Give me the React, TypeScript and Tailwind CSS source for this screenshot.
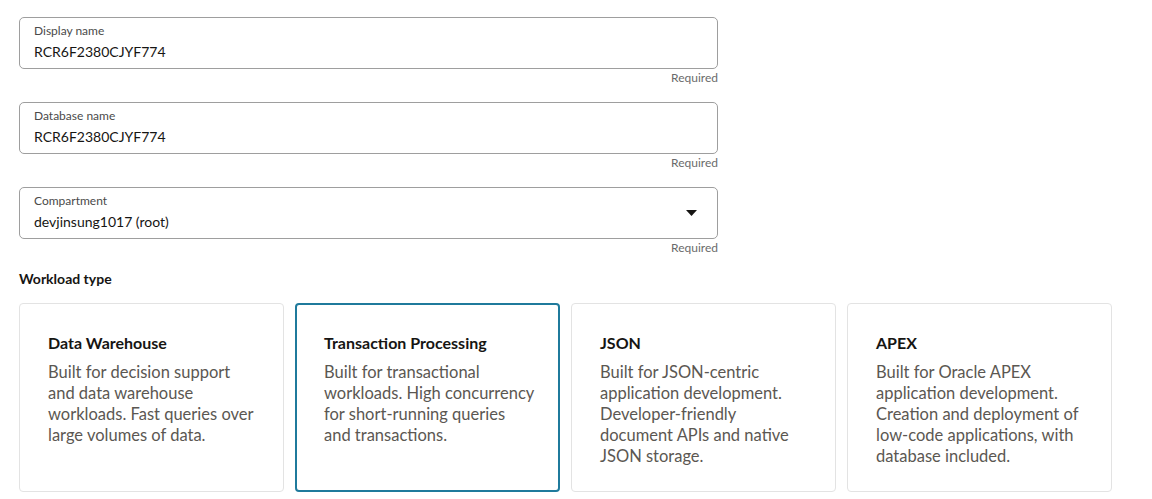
import { useState } from 'react';

const fields = [
  { label: 'Display name', value: 'RCR6F2380CJYF774', select: false },
  { label: 'Database name', value: 'RCR6F2380CJYF774', select: false },
  { label: 'Compartment', value: 'devjinsung1017 (root)', select: true },
];

const workloads = [
  {
    id: 'dw',
    title: 'Data Warehouse',
    desc: 'Built for decision support and data warehouse workloads. Fast queries over large volumes of data.',
  },
  {
    id: 'tp',
    title: 'Transaction Processing',
    desc: 'Built for transactional workloads. High concurrency for short-running queries and transactions.',
  },
  {
    id: 'json',
    title: 'JSON',
    desc: 'Built for JSON-centric application development. Developer-friendly document APIs and native JSON storage.',
  },
  {
    id: 'apex',
    title: 'APEX',
    desc: 'Built for Oracle APEX application development. Creation and deployment of low-code applications, with database included.',
  },
];

export default function App() {
  const [selected, setSelected] = useState('tp');

  return (
    <div className="min-h-screen bg-white pl-[19px] pt-[17px] font-['Lato','Noto_Sans',sans-serif] text-[#161513]">
      <div className="w-[699px] flex flex-col gap-4">
        {fields.map((f) => (
          <div key={f.label} className="flex flex-col">
            <div className="h-[52px] rounded-[5px] border border-[#9e9e9e] pl-[14px] pr-[20px] flex items-center">
              <div className="flex-1 self-start pt-[5px] flex flex-col">
                <span className="text-[12px] leading-[16px] text-[#4a4a4a]">{f.label}</span>
                <span className="mt-[3px] text-[14px] leading-[20px] text-[#161513]">{f.value}</span>
              </div>
              {f.select && (
                <svg width="11" height="6" viewBox="0 0 11 6" className="ml-2">
                  <path d="M0 0h11L5.5 6z" fill="#161513" />
                </svg>
              )}
            </div>
            <div className="text-right text-[12px] leading-[17px] text-[#6b6b6b]">Required</div>
          </div>
        ))}
      </div>

      <div className="mt-[14px] text-[14px] leading-[18px] font-bold text-[#161513]">Workload type</div>

      <div className="mt-[15px] flex gap-[11px]">
        {workloads.map((w) => {
          const active = selected === w.id;
          return (
            <button
              key={w.id}
              type="button"
              onClick={() => setSelected(w.id)}
              className={
                'w-[265px] h-[189px] rounded-[4px] text-left flex flex-col ' +
                (active
                  ? 'border-2 border-[#1f7a9c] pl-[27px] pr-[23px] pt-[28px]'
                  : 'border border-[#e3e3e3] pl-[28px] pr-[24px] pt-[29px]')
              }
            >
              <span className="text-[16px] leading-[20px] font-bold text-[#161513]">{w.title}</span>
              <span className="mt-[9px] text-[16.5px] leading-[21px] text-[#5b5752]">{w.desc}</span>
            </button>
          );
        })}
      </div>
    </div>
  );
}
